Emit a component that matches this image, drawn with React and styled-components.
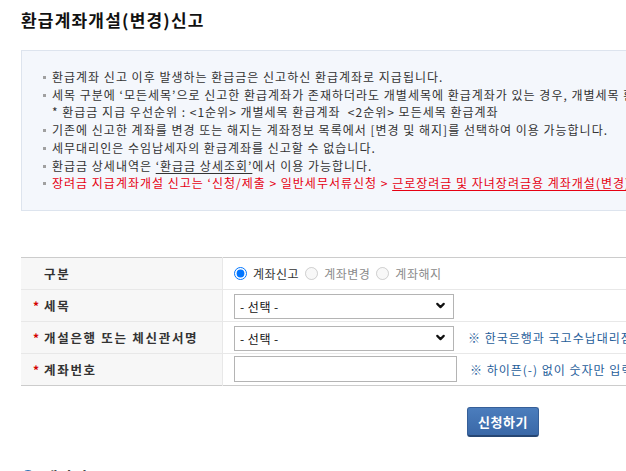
import React from 'react';
import styled, { createGlobalStyle } from 'styled-components';
import { ChevronDown } from 'lucide-react';

const Global = createGlobalStyle`
html, body {
    margin: 0;
    padding: 0;
    background: #ffffff;
    overflow: hidden;
}
body {
    font-family: 'Noto Sans CJK KR', 'Noto Sans', sans-serif;
    color: #333333;
}
`

const notices = [
    { text: '환급계좌 신고 이후 발생하는 환급금은 신고하신 환급계좌로 지급됩니다.' },
    { text: '세목 구분에 ‘모든세목’으로 신고한 환급계좌가 존재하더라도 개별세목에 환급계좌가 있는 경우, 개별세목 환급계좌로 지급됩니다.' },
    { text: '* 환급금 지급 우선순위 : <1순위> 개별세목 환급계좌 \u00a0<2순위> 모든세목 환급계좌', sub: true },
    { text: '기존에 신고한 계좌를 변경 또는 해지는 계좌정보 목록에서 [변경 및 해지]를 선택하여 이용 가능합니다.' },
    { text: '세무대리인은 수임납세자의 환급계좌를 신고할 수 없습니다.' },
];

export default function App() {
    return (
        <>
            <Global />
            <Page>
                <Title>환급계좌개설(변경)신고</Title>
                <InfoBox>
                    <List>
                        {notices.map((n, i) => (
                            <Item key={i} $sub={n.sub}>{n.text}</Item>
                        ))}
                        <Item>
                            환급금 상세내역은 <Link>‘환급금 상세조회’</Link>에서 이용 가능합니다.
                        </Item>
                        <Item $red>
                            장려금 지급계좌개설 신고는 ‘신청/제출 &gt; 일반세무서류신청 &gt; <Link $red>근로장려금 및 자녀장려금용 계좌개설(변경)신고</Link>’에서 신청 가능합니다.
                        </Item>
                    </List>
                </InfoBox>

                <Form>
                    <tbody>
                        <Row>
                            <Label><Star $hide>*</Star>구분</Label>
                            <Cell>
                                <RadioGroup>
                                    <RadioLabel>
                                        <Radio type="radio" name="kind" defaultChecked />계좌신고
                                    </RadioLabel>
                                    <RadioLabel $disabled>
                                        <Radio type="radio" name="kind" disabled />계좌변경
                                    </RadioLabel>
                                    <RadioLabel $disabled>
                                        <Radio type="radio" name="kind" disabled />계좌해지
                                    </RadioLabel>
                                </RadioGroup>
                            </Cell>
                        </Row>
                        <Row>
                            <Label><Star>*</Star>세목</Label>
                            <Cell>
                                <SelectWrap>
                                    <Select defaultValue="">
                                        <option value="">- 선택 -</option>
                                    </Select>
                                    <Chevron size={13} strokeWidth={4} />
                                </SelectWrap>
                            </Cell>
                        </Row>
                        <Row>
                            <Label><Star>*</Star>개설은행 또는 체신관서명</Label>
                            <Cell>
                                <Inline>
                                    <SelectWrap>
                                        <Select defaultValue="">
                                            <option value="">- 선택 -</option>
                                        </Select>
                                        <Chevron size={13} strokeWidth={4} />
                                    </SelectWrap>
                                    <Note>※ 한국은행과 국고수납대리점인 금융기관만 선택 가능합니다.</Note>
                                </Inline>
                            </Cell>
                        </Row>
                        <Row $last>
                            <Label><Star>*</Star>계좌번호</Label>
                            <Cell>
                                <Inline>
                                    <Input type="text" />
                                    <Note $pad>※ 하이픈(-) 없이 숫자만 입력하세요.</Note>
                                </Inline>
                            </Cell>
                        </Row>
                    </tbody>
                </Form>

                <Buttons>
                    <Submit>신청하기</Submit>
                </Buttons>

                <SubTitle><Dot />계좌정보</SubTitle>
            </Page>
        </>
    )
}

const Page = styled.div`
width: 964px;
padding-left: 21px;
`
const Title = styled.h1`
margin: 8px 0 0;
font-size: 17px;
font-weight: 700;
line-height: 24px;
letter-spacing: 1.2px;
color: #111111;
`
const InfoBox = styled.div`
margin-top: 18px;
border: 1px solid #dde4ee;
background: #f4f7fc;
padding: 17px 0 18px 21px;
`
const List = styled.ul`
list-style: none;
margin: 0;
padding: 0;
`
const Item = styled.li`
position: relative;
padding-left: 9px;
font-size: 12px;
line-height: 17.7px;
letter-spacing: 1px;
white-space: nowrap;
color: ${p => p.$red ? '#e60012' : '#333333'};

&::before {
    content: '';
    display: ${p => p.$sub ? 'none' : 'block'};
    position: absolute;
    left: 0;
    top: 8px;
    width: 3px;
    height: 3px;
    background: #a0a0a0;
}
`
const Link = styled.span`
text-decoration: underline;
text-underline-offset: 2px;
color: ${p => p.$red ? '#e60012' : '#333333'};
`
const Form = styled.table`
margin-top: 46px;
width: 100%;
border-collapse: collapse;
border-top: 1px solid #cccccc;
`
const Row = styled.tr`
height: 32px;
border-bottom: 1px solid ${p => p.$last ? '#cccccc' : '#e8e8e8'};
`
const Label = styled.th`
width: 189px;
padding: 0 0 0 12px;
background: #f7f7f7;
border-right: 1px solid #e8e8e8;
text-align: left;
font-size: 12.5px;
font-weight: 700;
letter-spacing: 1.7px;
color: #333333;
white-space: nowrap;
`
const Star = styled.span`
display: inline-block;
width: 11px;
color: #d40000;
font-size: 12px;
letter-spacing: 0;
visibility: ${p => p.$hide ? 'hidden' : 'visible'};
`
const Cell = styled.td`
padding: 0 0 0 11px;
`
const RadioGroup = styled.div`
display: flex;
align-items: center;
gap: 6px;
`
const RadioLabel = styled.label`
display: flex;
align-items: center;
gap: 6px;
font-size: 12px;
letter-spacing: 0.5px;
color: ${p => p.$disabled ? '#8a8a8a' : '#333333'};
`
const Radio = styled.input`
margin: 0;
width: 13px;
height: 13px;
`
const Inline = styled.div`
display: flex;
align-items: center;
`
const SelectWrap = styled.div`
position: relative;
width: 220px;
height: 25px;
`
const Select = styled.select`
appearance: none;
width: 100%;
height: 100%;
margin: 0;
padding: 0 20px 0 5px;
border: 1px solid #b4b4b4;
border-radius: 0;
background: #ffffff;
font-family: 'Noto Sans CJK KR', sans-serif;
font-size: 12px;
letter-spacing: 0.5px;
color: #111111;
`
const Chevron = styled(ChevronDown)`
position: absolute;
right: 7px;
top: 6px;
color: #111111;
pointer-events: none;
`
const Input = styled.input`
box-sizing: border-box;
width: 223px;
height: 26px;
margin: 0;
border: 1px solid #b4b4b4;
border-radius: 0;
`
const Note = styled.span`
margin-left: ${p => p.$pad ? '13px' : '14px'};
font-size: 12px;
letter-spacing: 1px;
color: #1f5e9a;
white-space: nowrap;
`
const Buttons = styled.div`
display: flex;
justify-content: center;
margin-top: 21px;
`
const Submit = styled.button`
width: 72px;
height: 30px;
border: 1px solid #365f98;
border-bottom: 2px solid #264673;
border-radius: 3px;
background: linear-gradient(#4b7dbd, #3a68a7);
color: #ffffff;
font-family: 'Noto Sans CJK KR', sans-serif;
font-size: 13px;
font-weight: 700;
letter-spacing: 0.5px;
`
const SubTitle = styled.h2`
display: flex;
align-items: center;
gap: 8px;
margin: 30px 0 0;
font-size: 16px;
font-weight: 700;
line-height: 20px;
color: #111111;
`
const Dot = styled.span`
width: 14px;
height: 14px;
border-radius: 50%;
background: #2b6fb3;
`
